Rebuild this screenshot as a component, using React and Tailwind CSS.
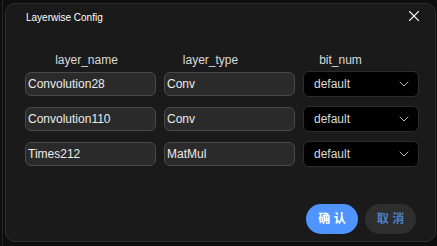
import React from "react";
import { ChevronDown } from "lucide-react";

const rows = [
  { name: "Convolution28", type: "Conv", bit: "default" },
  { name: "Convolution110", type: "Conv", bit: "default" },
  { name: "Times212", type: "MatMul", bit: "default" },
];

const CloseIcon = () => (
  <svg width="10" height="10" viewBox="0 0 10 10" className="text-white">
    <path d="M0.6 0.6 9.4 9.4M9.4 0.6 0.6 9.4" stroke="currentColor" strokeWidth="1.3" strokeLinecap="round" />
  </svg>
);

const TextBox = ({ value }) => (
  <div className="w-[131px] h-[24px] flex items-center pl-[2px] rounded-[6px] border border-[#4a4a4a] bg-[#2a2a2a] text-[12px] text-[#ececec]">
    {value}
  </div>
);

const BitSelect = ({ value }) => (
  <div className="w-[116px] h-[26px] flex items-center justify-between pl-[10px] pr-[6px] rounded-[6px] border border-[#2c2c2c] bg-black text-[12px] text-[#dcdcdc]">
    <span>{value}</span>
    <ChevronDown size={16} strokeWidth={1.5} className="text-[#b5b5b5]" />
  </div>
);

export default function App() {
  return (
    <div
      className="w-[437px] h-[246px] flex bg-[#0e0e0e] overflow-hidden"
      style={{ fontFamily: '"Liberation Sans", Arial, "Noto Sans CJK SC", sans-serif' }}
    >
      <div className="w-[2px] shrink-0" />
      <div className="w-[1px] shrink-0 bg-[#252525]" />
      <div className="w-[2px] shrink-0" />
      <div className="mt-[3px] w-[431px] h-[239px] shrink-0 flex flex-col rounded-[10px] border border-[#2e2e2e] bg-[#1a1a1a]">
        <div className="flex items-start justify-between pt-[7px] pl-[20px] pr-[16px]">
          <div className="text-[10px] leading-[14px] text-white">Layerwise Config</div>
          <CloseIcon />
        </div>

        <div className="flex pl-[19px] mt-[27px] text-[12px] leading-[16px] text-[#dadada]">
          <div className="w-[123px] text-center">layer_name</div>
          <div className="w-[125px] text-center">layer_type</div>
          <div className="w-[135px] text-center">bit_num</div>
        </div>

        <div className="flex flex-col gap-[9px] mt-[3px] pl-[19px]">
          {rows.map((r, i) => (
            <div key={i} className="h-[26px] flex items-center gap-[8px]">
              <TextBox value={r.name} />
              <TextBox value={r.type} />
              <BitSelect value={r.bit} />
            </div>
          ))}
        </div>

        <div className="mt-auto pb-[7px] pr-[19px] flex justify-end gap-[7px]">
          <button className="w-[52px] h-[30px] rounded-[15px] bg-[#4f94ff] text-white text-[12px] font-bold">
            确 认
          </button>
          <button className="w-[51px] h-[30px] rounded-[15px] bg-[#2e2e2e] text-[#4f80c8] text-[12px] font-bold">
            取 消
          </button>
        </div>
      </div>
    </div>
  );
}
